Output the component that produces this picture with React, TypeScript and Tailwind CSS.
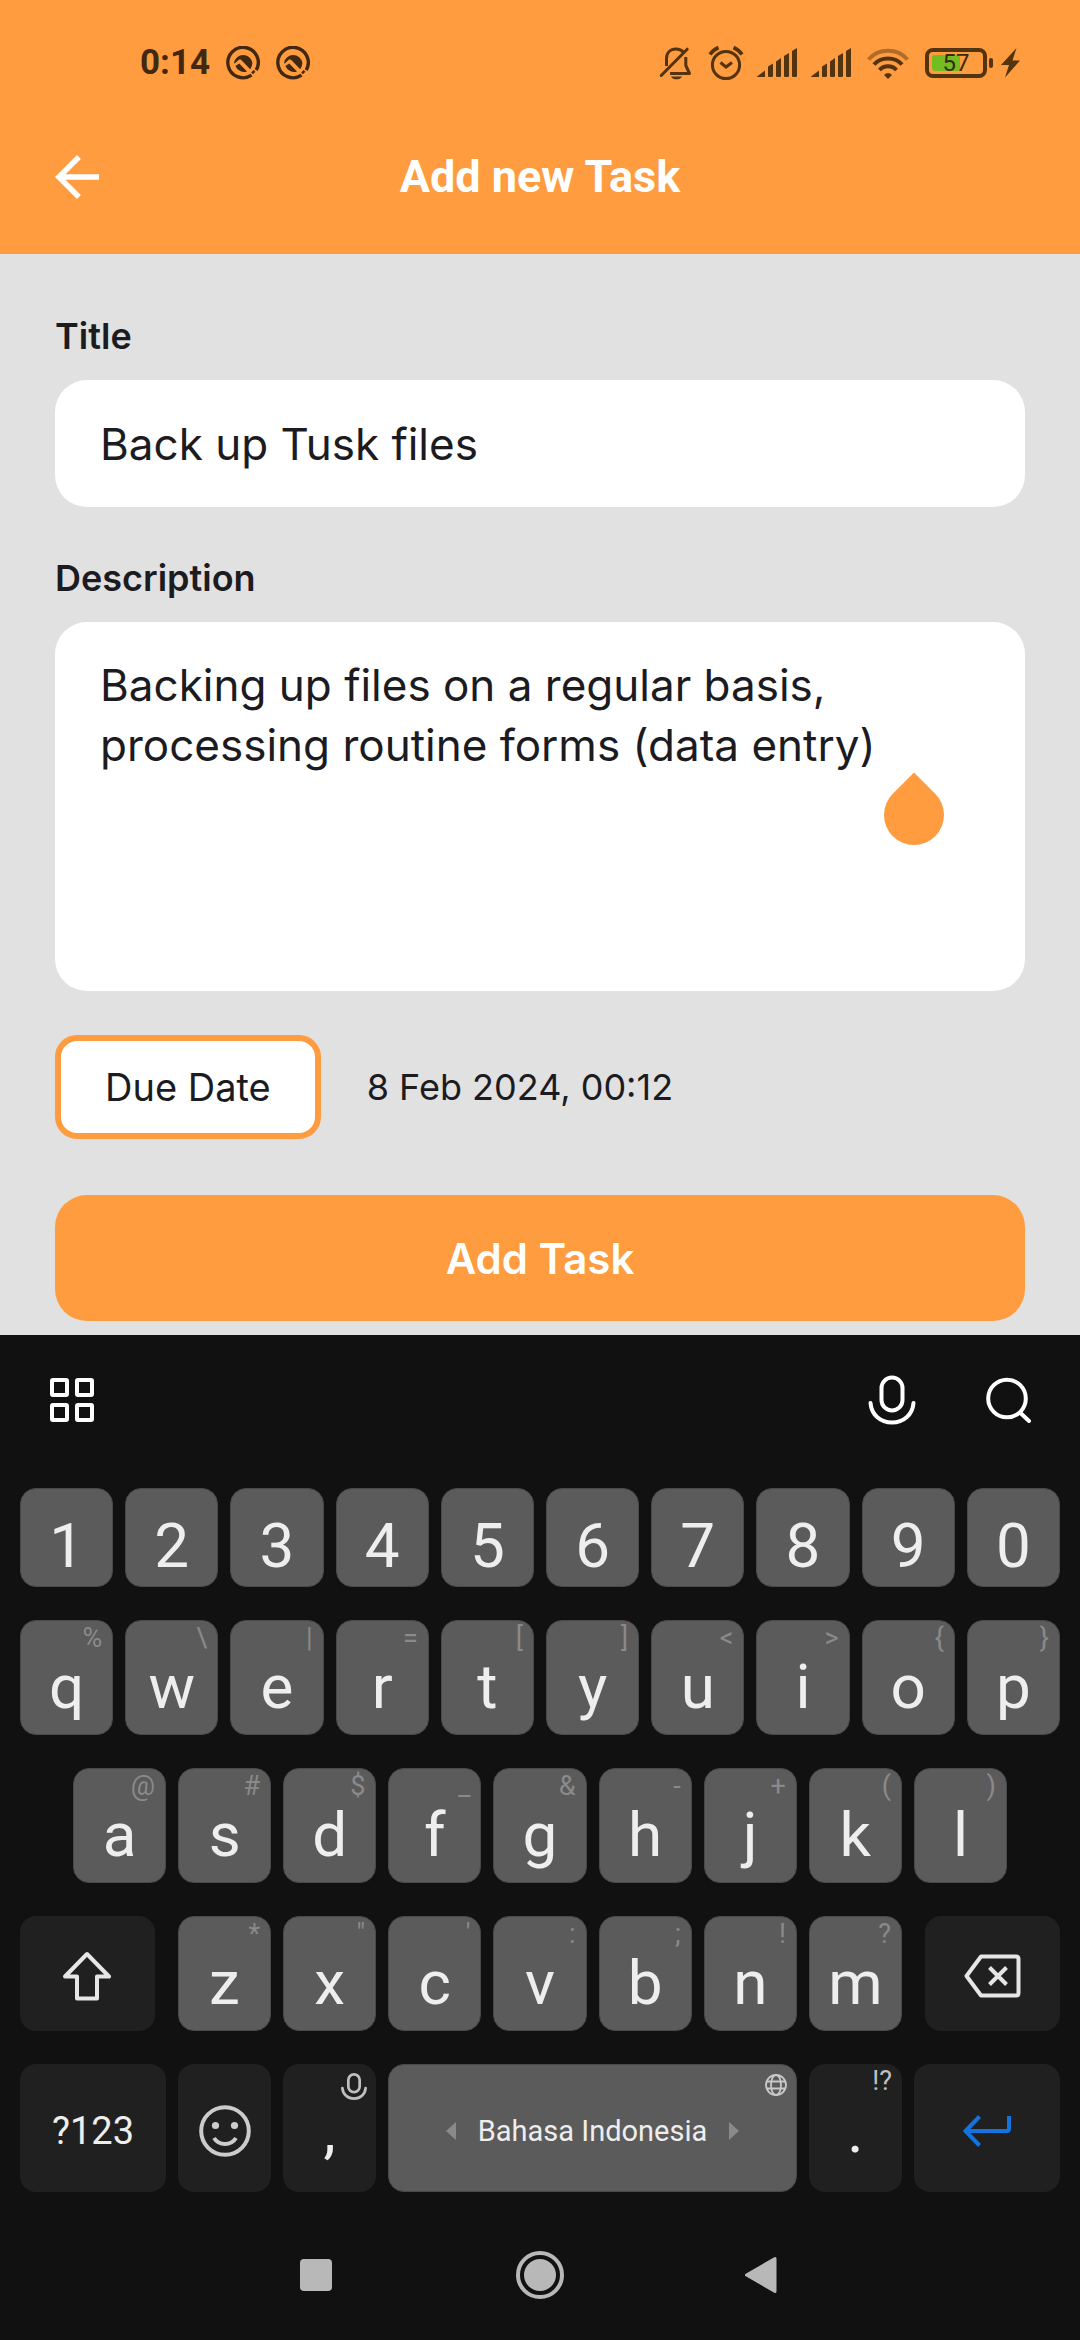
import type { ReactNode } from "react";

const INK = "#54330f";

function AppNoticeIcon() {
  return (
    <svg viewBox="0 0 34 34" className="size-[34px]" fill="none" aria-hidden="true">
      <path d="M24.9 29.6A15.2 15.2 0 1 1 29.8 24.9" transform="rotate(-3 17 17)" stroke="#432811" strokeWidth="3.4" />
      <path d="M26.4 25.2l1.8 1.8" stroke="#432811" strokeWidth="3.4" />
      <path d="M8 17A9.300 9.300 0 0 1 26.400 17Q26.400 20.500 24.200 23.200L14.800 13.600H13L8.800 17.400Z" fill="#432811" />
      <path d="M9.4 20L13.2 17.4L21 25.400A9.3 9.3 0 0 1 9.4 20Z" fill="#432811" />
    </svg>
  );
}

function BellOffIcon() {
  return (
    <svg viewBox="0 0 33 34" className="h-[34px] w-[33px]" fill="none" stroke={INK} strokeWidth="3" aria-hidden="true">
      <path d="M7.5 20V12.5C7.5 6.5 11.5 3 17 3C20 3 22.5 4 24.5 6.2" />
      <path d="M26.8 11V19.5L30.5 27.5H11" strokeLinejoin="round" />
      <path d="M2.2 29.5L28.2 3.2" strokeLinecap="round" />
      <path d="M12 30.5h11c-1 2-3 2.8-5.500 2.800s-4.500-.8-5.500-2.800z" fill={INK} stroke="none" />
    </svg>
  );
}

function AlarmIcon() {
  return (
    <svg viewBox="0 0 36 36" className="size-[36px]" fill="none" stroke={INK} aria-hidden="true">
      <circle cx="18" cy="20" r="13.6" strokeWidth="3" />
      <path d="M2 9.500Q5 5 10.500 2.500M34 9.500Q31 5 25.500 2.500" strokeWidth="3.600" />
      <path d="M12.500 17.500L18 22L24 17.500" strokeWidth="3" />
    </svg>
  );
}

function SignalIcon() {
  return (
    <svg viewBox="0 0 41 30" className="h-[30px] w-[41px]" fill={INK} aria-hidden="true">
      <path d="M0 28.500L8 22.500V29H1Q0 29 0 28.500Z" />
      <path d="M11 18.500L16 15.500V28q0 1-1 1h-3q-1 0-1-1z" />
      <path d="M19 13.500L24 10V28q0 1-1 1h-3q-1 0-1-1z" />
      <path d="M27 8L32 5V28q0 1-1 1h-3q-1 0-1-1z" />
      <path d="M35 3L40 0V28q0 1-1 1h-3q-1 0-1-1z" />
    </svg>
  );
}

function WifiIcon() {
  return (
    <svg viewBox="0 0 42 31" className="h-[31px] w-[42px]" fill="none" stroke={INK} strokeWidth="4" aria-hidden="true">
      <path d="M1.500 11.500C11.500-.2 30.500-.2 40.500 11.500" opacity=".45" />
      <path d="M7 16.500C14 8.500 28 8.500 35 16.500" />
      <path d="M12.500 22C17 17 25 17 29.500 22" />
      <path d="M17 27q4-4 8 0l-4 4z" fill={INK} stroke="none" />
    </svg>
  );
}

function Battery() {
  return (
    <div className="flex items-center gap-[2px]">
      <div className="relative flex h-[30px] w-[62px] items-center justify-center rounded-[8px] border-4 border-[#54330f]">
        <span className="absolute left-[3px] h-4 w-7 rounded-[3px] bg-[#74bd20]" />
        <span className="relative text-[24px] leading-none text-[#3a2a0c]">57</span>
      </div>
      <span className="h-[10px] w-1 rounded-sm bg-[#54330f]" />
    </div>
  );
}

function StatusBar() {
  return (
    <div className="flex h-[124px] items-center pt-[2px] pr-[60px] pl-[140px]">
      <span className="text-[35px] leading-[40px] font-bold text-[#432811]">0:14</span>
      <span className="ml-4 flex gap-4">
        <AppNoticeIcon />
        <AppNoticeIcon />
      </span>
      <div className="ml-auto flex items-center">
        <BellOffIcon />
        <span className="ml-4"><AlarmIcon /></span>
        <span className="ml-[13px]"><SignalIcon /></span>
        <span className="ml-[13px]"><SignalIcon /></span>
        <span className="ml-[15px]"><WifiIcon /></span>
        <span className="ml-4"><Battery /></span>
        <svg viewBox="0 0 19 30" className="ml-2 h-[30px] w-[19px]" fill={INK} aria-hidden="true">
          <path d="M15.500 0L0 17H8L4 29.500L19 12.500H11.500Z" />
        </svg>
      </div>
    </div>
  );
}

type KeyProps = { label: string; hint?: string; short?: boolean };

function LetterKey({ label, hint, short }: KeyProps) {
  return (
    <button
      type="button"
      className={
        short
          ? "flex h-[99px] items-end justify-center rounded-2xl border border-[#484848] bg-[#5b5b5b] pb-[9px] text-[62px] leading-none text-[#eee]"
          : "relative flex h-[115px] items-end justify-center rounded-2xl border border-[#484848] bg-[#5b5b5b] pb-4 text-[62px] leading-none text-[#eee]"
      }
    >
      {label}
      {hint && (
        <span className="absolute top-1 right-[10px] text-[27px] leading-none text-[#8a8a8a]">{hint}</span>
      )}
    </button>
  );
}

function DarkKey({ name, tall, children }: { name: string; tall?: boolean; children: ReactNode }) {
  return (
    <button
      type="button"
      aria-label={name}
      className={
        tall
          ? "relative flex h-32 items-center justify-center rounded-2xl bg-[#202020] pt-[6px] text-[#eee]"
          : "relative flex h-[115px] items-center justify-center rounded-2xl bg-[#202020] pt-[4px] text-[#eee]"
      }
    >
      {children}
    </button>
  );
}

function MicIcon({ className, stroke }: { className: string; stroke: number }) {
  return (
    <svg viewBox="0 0 48 50" className={className} fill="none" stroke="currentColor" strokeWidth={stroke} strokeLinecap="round" aria-hidden="true">
      <rect x="13.500" y="2.500" width="21" height="33" rx="10.500" />
      <path d="M2.500 28C3.500 40 12.500 47.500 24 47.500S44.500 40 45.500 28" />
    </svg>
  );
}

const digits = ["1", "2", "3", "4", "5", "6", "7", "8", "9", "0"];
const topRow = [["q", "%"], ["w", "\\"], ["e", "|"], ["r", "="], ["t", "["], ["y", "]"], ["u", "<"], ["i", ">"], ["o", "{"], ["p", "}"]];
const homeRow = [["a", "@"], ["s", "#"], ["d", "$"], ["f", "_"], ["g", "&"], ["h", "-"], ["j", "+"], ["k", "("], ["l", ")"]];
const bottomRow = [["z", "*"], ["x", "\""], ["c", "'"], ["v", ":"], ["b", ";"], ["n", "!"], ["m", "?"]];

function Keyboard() {
  return (
    <section aria-label="Keyboard" className="bg-[#111] font-['Roboto',sans-serif]">
      <div className="flex h-[130px] items-center pr-[48px] pl-[50px] text-white">
        <button type="button" aria-label="Keyboard menu">
          <svg viewBox="0 0 44 44" className="size-[44px]" fill="none" stroke="currentColor" strokeWidth="4" aria-hidden="true">
            <rect x="2" y="2" width="15" height="15" rx="1" />
            <rect x="27" y="2" width="15" height="15" rx="1" />
            <rect x="2" y="27" width="15" height="15" rx="1" />
            <rect x="27" y="27" width="15" height="15" rx="1" />
          </svg>
        </button>
        <button type="button" aria-label="Voice input" className="ml-auto">
          <MicIcon className="h-[50px] w-12" stroke={4} />
        </button>
        <button type="button" aria-label="Search" className="ml-[70px]">
          <svg viewBox="0 0 46 46" className="size-[46px]" fill="none" stroke="currentColor" strokeWidth="4" strokeLinecap="round" aria-hidden="true">
            <circle cx="21" cy="21.500" r="18.800" />
            <path d="M34.500 36L43 44" />
          </svg>
        </button>
      </div>

      <div className="flex flex-col gap-[33px] px-5 pt-[23px]">
        <div className="grid grid-cols-10 gap-3">
          {digits.map((d) => <LetterKey key={d} label={d} short />)}
        </div>
        <div className="grid grid-cols-10 gap-3">
          {topRow.map(([k, h]) => <LetterKey key={k} label={k} hint={h} />)}
        </div>
        <div className="grid grid-cols-9 gap-3 px-[53px]">
          {homeRow.map(([k, h]) => <LetterKey key={k} label={k} hint={h} />)}
        </div>
        <div className="grid grid-cols-[135fr_725fr_135fr] gap-[23px]">
          <DarkKey name="Shift">
            <svg viewBox="0 0 48 50" className="h-[50px] w-12" fill="none" stroke="#e6e6e6" strokeWidth="4" strokeLinejoin="round" aria-hidden="true">
              <path d="M24 3L46 25.500H34V47.500H14V25.500H2Z" />
            </svg>
          </DarkKey>
          <div className="grid grid-cols-7 gap-3">
            {bottomRow.map(([k, h]) => <LetterKey key={k} label={k} hint={h} />)}
          </div>
          <DarkKey name="Backspace">
            <svg viewBox="0 0 57 44" className="h-[44px] w-[57px]" fill="none" stroke="#e6e6e6" strokeWidth="4" strokeLinejoin="round" aria-hidden="true">
              <path d="M17 2.500H52Q54.500 2.500 54.500 5V39Q54.500 41.500 52 41.500H17L2.500 22Z" />
              <path d="M25.500 13.500L42.500 30.500M42.500 13.500L25.500 30.500" />
            </svg>
          </DarkKey>
        </div>
        <div className="grid grid-cols-[146fr_93fr_93fr_409fr_93fr_146fr] gap-3">
          <DarkKey name="Symbols" tall>
            <span className="text-[38px] leading-none">?123</span>
          </DarkKey>
          <DarkKey name="Emoji" tall>
            <svg viewBox="0 0 52 52" className="size-[52px]" fill="none" stroke="#ccc" strokeWidth="4" aria-hidden="true">
              <circle cx="26" cy="26" r="23.800" />
              <circle cx="16.500" cy="20.500" r="3.600" fill="#ccc" stroke="none" />
              <circle cx="35.500" cy="20.500" r="3.600" fill="#ccc" stroke="none" />
              <path d="M15 33C20 41 32 41 37 33" />
            </svg>
          </DarkKey>
          <DarkKey name="Comma" tall>
            <span className="text-[62px] leading-none">,</span>
            <span className="absolute top-[9px] right-[9px] text-[#c0c0c0]">
              <MicIcon className="h-[27px] w-[26px]" stroke={5} />
            </span>
          </DarkKey>
          <button
            type="button"
            className="relative flex h-32 items-center justify-center gap-[22px] rounded-2xl border border-[#484848] bg-[#5b5b5b] pt-[6px] text-[29px] leading-none text-[#eee]"
          >
            <svg viewBox="0 0 10 18" className="h-[18px] w-[10px]" fill="#8a8a8a" aria-hidden="true"><path d="M10 0V18L0 9Z" /></svg>
            Bahasa Indonesia
            <svg viewBox="0 0 10 18" className="h-[18px] w-[10px]" fill="#8a8a8a" aria-hidden="true"><path d="M0 0V18L10 9Z" /></svg>
            <svg viewBox="0 0 24 24" className="absolute top-2 right-2 size-6" fill="none" stroke="#c8c8c8" strokeWidth="1.800" aria-hidden="true">
              <circle cx="12" cy="12" r="10" />
              <ellipse cx="12" cy="12" rx="5" ry="10" />
              <path d="M3 8.500H21M3 15.500H21" />
            </svg>
          </button>
          <DarkKey name="Period" tall>
            <span className="text-[62px] leading-none">.</span>
            <span className="absolute top-1 right-[10px] text-[27px] leading-none text-[#c0c0c0]">!?</span>
          </DarkKey>
          <DarkKey name="Enter" tall>
            <svg viewBox="0 0 50 32" className="h-8 w-[50px]" fill="none" stroke="#1373e0" strokeWidth="4" aria-hidden="true">
              <path d="M47 1V14Q47 16 45 16H3.500M17.500 1.500L3.500 16L17.500 30.500" />
            </svg>
          </DarkKey>
        </div>
      </div>

      <nav aria-label="System" className="mt-[18px] flex h-[130px] items-center justify-center gap-44">
        <button type="button" aria-label="Recent apps" className="flex size-12 items-center justify-center">
          <span className="size-8 rounded-sm bg-[#b8b8b8]" />
        </button>
        <button type="button" aria-label="Home" className="flex size-12 items-center justify-center rounded-full border-4 border-[#b8b8b8]">
          <span className="size-8 rounded-full bg-[#b8b8b8]" />
        </button>
        <button type="button" aria-label="Back">
          <svg viewBox="0 0 48 48" className="size-12" fill="#b8b8b8" stroke="#b8b8b8" strokeWidth="3" strokeLinejoin="round" aria-hidden="true">
            <path d="M35 7.500V40.500L6.500 24Z" />
          </svg>
        </button>
      </nav>
    </section>
  );
}

export default function App() {
  return (
    <div className="flex min-h-screen flex-col bg-[#e1e1e1] text-[#1c1b1f]">
      <header className="bg-[#ff9c3f] pb-6 font-['Roboto',sans-serif]">
        <StatusBar />
        <div className="grid h-[106px] grid-cols-[66px_1fr_66px] items-center px-[44px]">
          <button type="button" aria-label="Back" className="text-white">
            <svg viewBox="0 0 24 24" className="size-[66px]" fill="currentColor" aria-hidden="true">
              <path d="M20 11H7.830l5.590-5.590L12 4l-8 8 8 8 1.410-1.410L7.830 13H20v-2z" />
            </svg>
          </button>
          <h1 className="text-center text-[45px] leading-[60px] font-bold text-white">Add new Task</h1>
        </div>
      </header>

      <form className="flex flex-1 flex-col px-[55px] pt-[58px] pb-[14px] font-['Inter',sans-serif]" onSubmit={(e) => e.preventDefault()}>
        <label htmlFor="title" className="text-[36px] leading-[48px] font-semibold">Title</label>
        <input
          id="title"
          type="text"
          defaultValue="Back up Tusk files"
          spellCheck={false}
          className="mt-5 h-[127px] w-full rounded-[32px] bg-white px-[45px] text-[44px] outline-none"
        />
        <label htmlFor="description" className="mt-[47px] text-[36px] leading-[48px] font-semibold">Description</label>
        <div className="relative mt-5 flex">
          <textarea
            id="description"
            defaultValue="Backing up files on a regular basis, processing routine forms (data entry)"
            spellCheck={false}
            className="h-[369px] w-full resize-none rounded-[32px] bg-white px-[45px] pt-[33px] text-[44px] leading-[60px] outline-none"
          />
          <span className="absolute top-[163px] left-[829px] size-[60px] rotate-45 rounded-full rounded-tl-none bg-[#ff9c3f]" />
        </div>
        <div className="mt-11 flex items-center gap-[46px]">
          <button type="button" className="h-[104px] rounded-[22px] border-[6px] border-[#ff9c3f] bg-white px-[44px] text-[38px]">
            Due Date
          </button>
          <span className="text-[36px]">8 Feb 2024, 00:12</span>
        </div>
        <button type="submit" className="mt-14 h-[126px] rounded-[32px] bg-[#ff9c3f] text-[42px] font-semibold text-white">
          Add Task
        </button>
      </form>

      <Keyboard />
    </div>
  );
}
